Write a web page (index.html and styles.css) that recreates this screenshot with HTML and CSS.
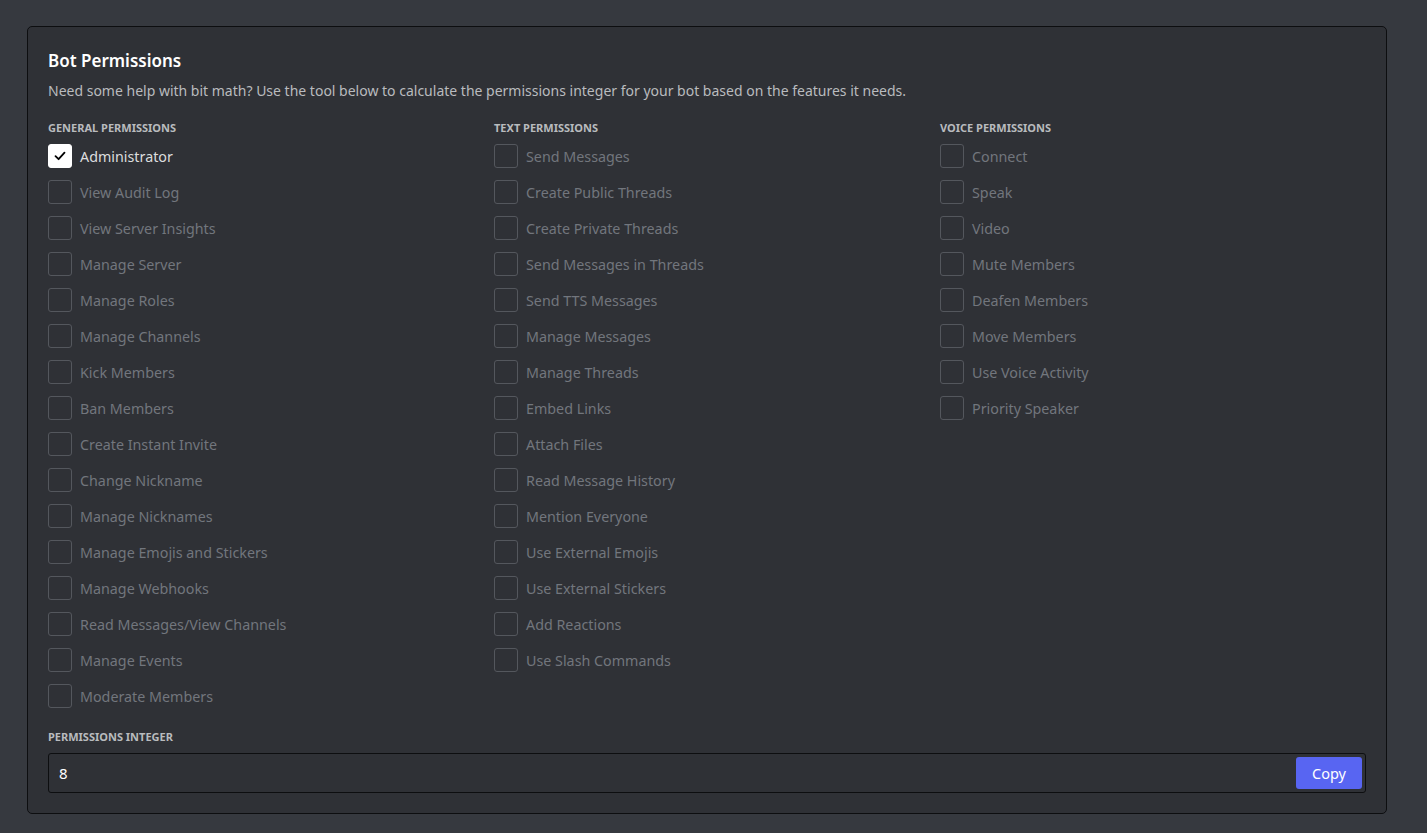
FILE: index.html
```html
<!DOCTYPE html>
<html>
<head>
<meta charset="utf-8">
<link rel="stylesheet" href="styles.css">
</head>
<body>
<div class="page">
  <section class="card">
    <h2 class="title">Bot Permissions</h2>
    <p class="desc">Need some help with bit math? Use the tool below to calculate the permissions integer for your bot based on the features it needs.</p>
    <div class="grid">
      <div class="col">
        <h3 class="head">General Permissions</h3>
        <label class="row on"><span class="box"><svg width="14" height="14" viewBox="0 0 14 14"><path d="M2.5 7.2 L5.6 10.2 L11.5 3.6" fill="none" stroke="#000" stroke-width="1.8" stroke-linecap="round" stroke-linejoin="round"/></svg></span><span class="lbl">Administrator</span></label>
        <label class="row"><span class="box"></span><span class="lbl">View Audit Log</span></label>
        <label class="row"><span class="box"></span><span class="lbl">View Server Insights</span></label>
        <label class="row"><span class="box"></span><span class="lbl">Manage Server</span></label>
        <label class="row"><span class="box"></span><span class="lbl">Manage Roles</span></label>
        <label class="row"><span class="box"></span><span class="lbl">Manage Channels</span></label>
        <label class="row"><span class="box"></span><span class="lbl">Kick Members</span></label>
        <label class="row"><span class="box"></span><span class="lbl">Ban Members</span></label>
        <label class="row"><span class="box"></span><span class="lbl">Create Instant Invite</span></label>
        <label class="row"><span class="box"></span><span class="lbl">Change Nickname</span></label>
        <label class="row"><span class="box"></span><span class="lbl">Manage Nicknames</span></label>
        <label class="row"><span class="box"></span><span class="lbl">Manage Emojis and Stickers</span></label>
        <label class="row"><span class="box"></span><span class="lbl">Manage Webhooks</span></label>
        <label class="row"><span class="box"></span><span class="lbl">Read Messages/View Channels</span></label>
        <label class="row"><span class="box"></span><span class="lbl">Manage Events</span></label>
        <label class="row"><span class="box"></span><span class="lbl">Moderate Members</span></label>
      </div>
      <div class="col">
        <h3 class="head">Text Permissions</h3>
        <label class="row"><span class="box"></span><span class="lbl">Send Messages</span></label>
        <label class="row"><span class="box"></span><span class="lbl">Create Public Threads</span></label>
        <label class="row"><span class="box"></span><span class="lbl">Create Private Threads</span></label>
        <label class="row"><span class="box"></span><span class="lbl">Send Messages in Threads</span></label>
        <label class="row"><span class="box"></span><span class="lbl">Send TTS Messages</span></label>
        <label class="row"><span class="box"></span><span class="lbl">Manage Messages</span></label>
        <label class="row"><span class="box"></span><span class="lbl">Manage Threads</span></label>
        <label class="row"><span class="box"></span><span class="lbl">Embed Links</span></label>
        <label class="row"><span class="box"></span><span class="lbl">Attach Files</span></label>
        <label class="row"><span class="box"></span><span class="lbl">Read Message History</span></label>
        <label class="row"><span class="box"></span><span class="lbl">Mention Everyone</span></label>
        <label class="row"><span class="box"></span><span class="lbl">Use External Emojis</span></label>
        <label class="row"><span class="box"></span><span class="lbl">Use External Stickers</span></label>
        <label class="row"><span class="box"></span><span class="lbl">Add Reactions</span></label>
        <label class="row"><span class="box"></span><span class="lbl">Use Slash Commands</span></label>
      </div>
      <div class="col">
        <h3 class="head">Voice Permissions</h3>
        <label class="row"><span class="box"></span><span class="lbl">Connect</span></label>
        <label class="row"><span class="box"></span><span class="lbl">Speak</span></label>
        <label class="row"><span class="box"></span><span class="lbl">Video</span></label>
        <label class="row"><span class="box"></span><span class="lbl">Mute Members</span></label>
        <label class="row"><span class="box"></span><span class="lbl">Deafen Members</span></label>
        <label class="row"><span class="box"></span><span class="lbl">Move Members</span></label>
        <label class="row"><span class="box"></span><span class="lbl">Use Voice Activity</span></label>
        <label class="row"><span class="box"></span><span class="lbl">Priority Speaker</span></label>
      </div>
    </div>
    <h3 class="head int-head">Permissions Integer</h3>
    <div class="field">
      <span class="value">8</span>
      <button class="copy">Copy</button>
    </div>
  </section>
</div>
</body>
</html>
```
FILE: styles.css
```css
html, body {
  margin: 0;
  padding: 0;
  background: #36393f;
}
body {
  font-family: "Noto Sans", "Open Sans", sans-serif;
  color: #dcddde;
}
.page {
  padding: 26px 40px 19px 27px;
}
.card {
  background: #2f3136;
  border: 1px solid #0d0e10;
  border-radius: 5px;
  padding: 22px 20px 19px 20px;
  height: 745px;
}
.title {
  margin: 0;
  font-size: 17px;
  font-weight: 600;
  color: #ffffff;
  line-height: 24px;
}
.desc {
  margin: 9px 0 0;
  font-size: 14px;
  line-height: 18px;
  color: #b9bbbe;
}
.grid {
  display: grid;
  grid-template-columns: repeat(3, 1fr);
  column-gap: 20px;
  margin-top: 20px;
}
.col {
  display: flex;
  flex-direction: column;
  gap: 12px;
}
.head {
  margin: 0 0 -4px;
  font-size: 11px;
  font-weight: 700;
  text-transform: uppercase;
  color: #b9bbbe;
  line-height: 16px;
}
.row {
  display: flex;
  align-items: center;
  gap: 8px;
  height: 24px;
}
.box {
  width: 22px;
  height: 22px;
  border: 1px solid #54575d;
  border-radius: 3px;
  display: flex;
  align-items: center;
  justify-content: center;
  flex: none;
}
.row.on .box {
  background: #ffffff;
  border-color: #ffffff;
}
.lbl {
  font-size: 14.3px;
  color: #72767d;
}
.row.on .lbl {
  color: #dcddde;
}
.int-head {
  margin-top: 21px;
  margin-bottom: 8px;
}
.field {
  display: flex;
  align-items: center;
  justify-content: space-between;
  height: 38px;
  border: 1px solid #0d0e10;
  border-radius: 3px;
  background: #2f3136;
  padding: 0 3px 0 10px;
}
.value {
  font-size: 15px;
  color: #ffffff;
}
.copy {
  background: #5865f2;
  color: #ffffff;
  border: none;
  border-radius: 3px;
  width: 66px;
  height: 32px;
  font-family: inherit;
  font-size: 14.5px;
  font-weight: 400;
}
```
